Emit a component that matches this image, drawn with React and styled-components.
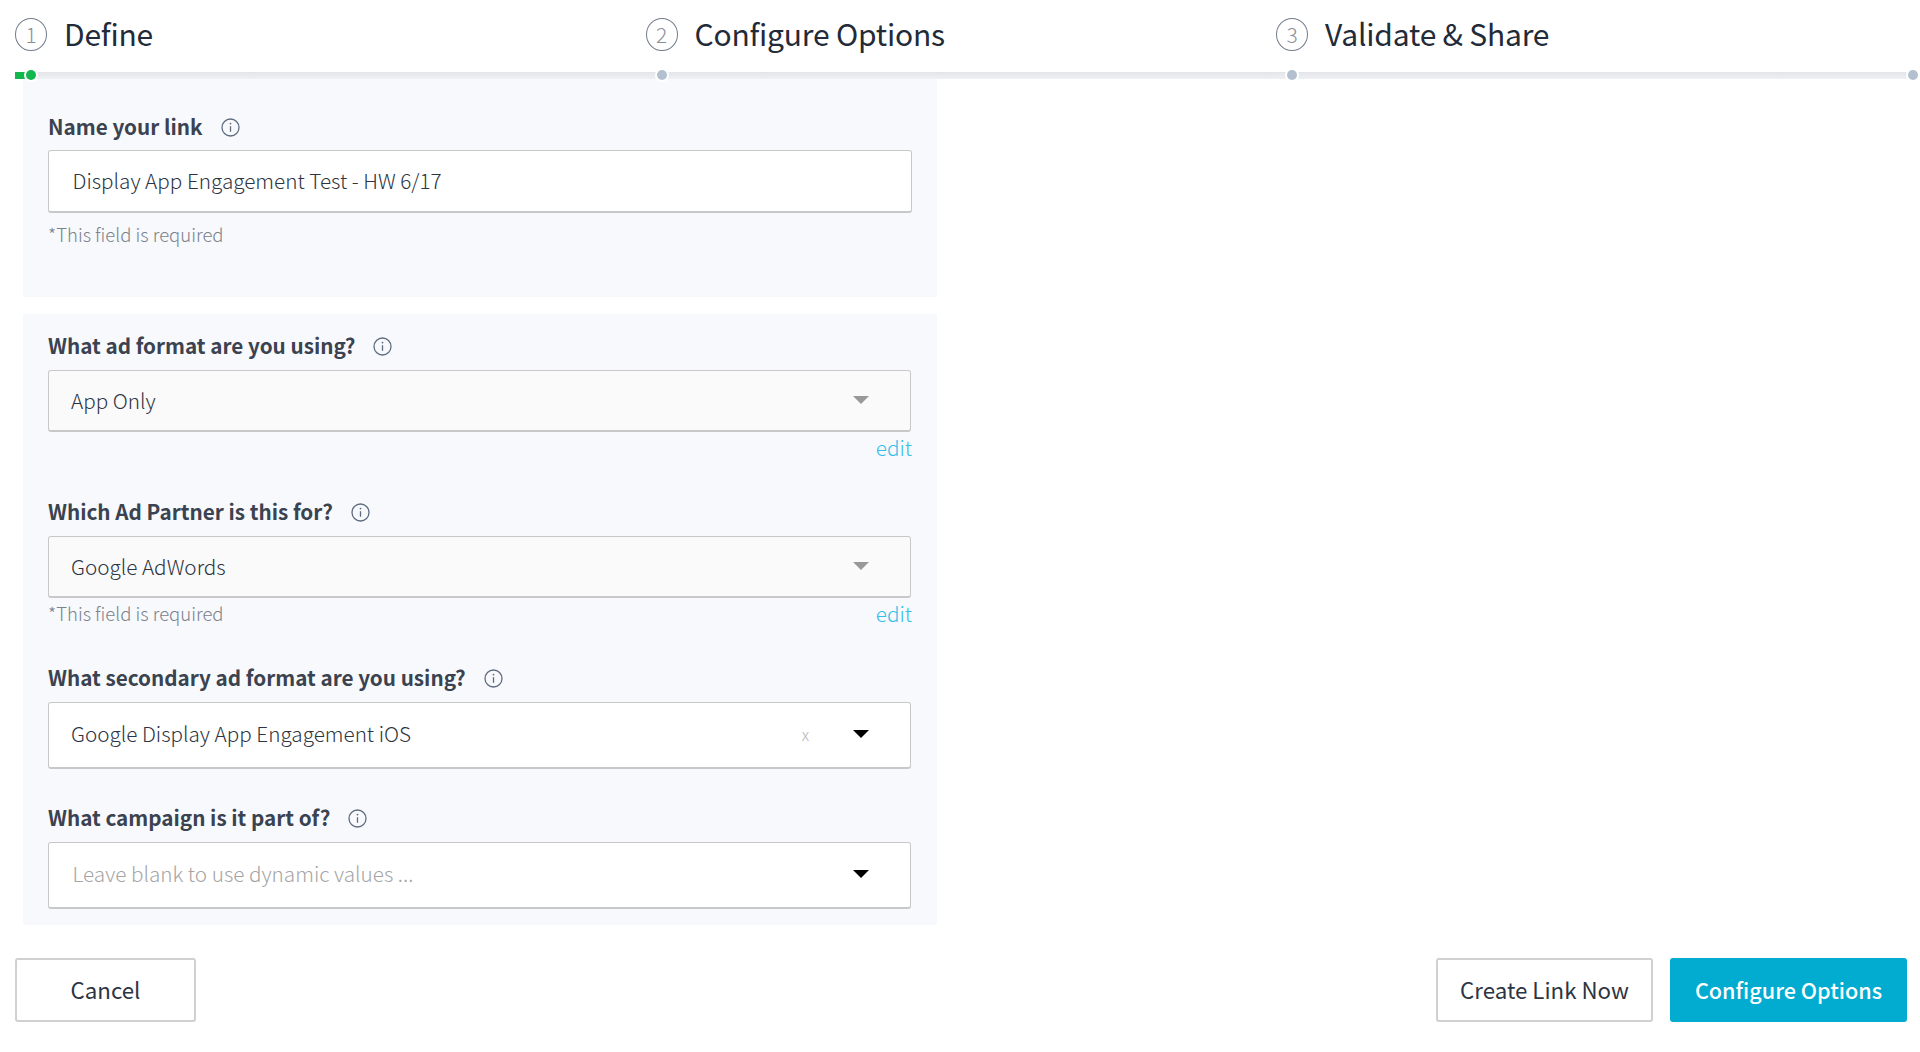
import React from 'react';
import styled, { createGlobalStyle } from 'styled-components';

const GlobalStyle = createGlobalStyle`
  html, body {
    margin: 0;
    padding: 0;
    background: #fff;
    font-family: "Noto Sans CJK SC", "Source Sans Pro", "Noto Sans", sans-serif;
    color: #2d3442;
  }
  * { box-sizing: border-box; }
`;

const Page = styled.div`
  width: 1920px;
  height: 1052px;
  overflow: hidden;
`;

const Stepper = styled.div`
  display: grid;
  grid-template-columns: repeat(3, 630.5px);
  padding-left: 15px;
`;

const Step = styled.div`
  display: flex;
  flex-direction: column;
`;

const StepHead = styled.div`
  height: 72px;
  padding-bottom: 4px;
  display: flex;
  align-items: center;
  gap: 17px;
`;

const StepNumber = styled.span`
  width: 32px;
  height: 33px;
  border: 1.5px solid #737c8c;
  border-radius: 50%;
  display: flex;
  align-items: center;
  justify-content: center;
  font-size: 21px;
  font-weight: 300;
  color: #8b8f98;
`;

const StepTitle = styled.span`
  font-size: 30px;
  line-height: 40px;
  margin-top: -2px;
  letter-spacing: -0.2px;
  font-weight: 400;
  color: #232a38;
`;

const StepBar = styled.div`
  position: relative;
  height: 7px;
  background: linear-gradient(#e3e5e9, #eef0f4);
`;

const Dot = styled.span`
  position: absolute;
  top: -2px;
  left: ${p => (p.$end ? 'auto' : '11px')};
  right: ${p => (p.$end ? '-11px' : 'auto')};
  width: 10px;
  height: 10px;
  border-radius: 50%;
  background: ${p => (p.$active ? '#12b84e' : '#b3c0cf')};
  box-shadow: 0 0 0 2px #fff;
`;

const Progress = styled.span`
  position: absolute;
  top: 0;
  left: 0;
  width: 10px;
  height: 7px;
  background: #12b84e;
  box-shadow: 0 0 0 1px #fff;
`;

const Main = styled.div`
  width: 914px;
  margin-left: 23px;
  display: flex;
  flex-direction: column;
  gap: 17px;
`;

const Panel = styled.section`
  background: #f7f9fc;
  padding: ${p => p.$padding};
  height: ${p => p.$height}px;
`;

const Field = styled.div`
  height: ${p => p.$height}px;
`;

const Label = styled.div`
  display: flex;
  align-items: center;
  gap: 18px;
  height: 28px;
  margin-bottom: ${p => p.$gap || 10}px;
  font-size: 20.7px;
  font-weight: 700;
  color: #3b4250;
`;

const InfoSvg = styled.svg`
  width: 19px;
  height: 19px;
  margin-top: 2px;
  flex: none;
`;

const Info = () => (
  <InfoSvg viewBox="0 0 19 19" fill="none" stroke="#5f6c80">
    <circle cx="9.5" cy="9.5" r="8.5" strokeWidth="1.3" />
    <path d="M9.5 8.2v5.6" strokeWidth="1.3" />
    <circle cx="9.5" cy="5.6" r="0.9" fill="#5f6c80" stroke="none" />
  </InfoSvg>
);

const TextInput = styled.input`
  display: block;
  width: 864px;
  height: 63px;
  padding: 0 24px 2px 23.5px;
  border: 1px solid #c8c8c8;
  border-bottom-width: 2px;
  border-radius: 3px;
  background: #fff;
  font: inherit;
  font-size: 20.7px;
  font-weight: 300;
  color: #2d3442;
  outline: none;
`;

const Select = styled.div`
  display: flex;
  align-items: center;
  width: 863px;
  height: ${p => (p.$disabled ? 62 : 67)}px;
  padding: 0 41px 0 22px;
  border: 1px solid #c8c8c8;
  border-bottom-width: 2px;
  border-radius: 3px;
  background: ${p => (p.$disabled ? '#fafafa' : '#fff')};
  font-size: 20.7px;
  font-weight: 300;
  color: #2d3442;
`;

const SelectValue = styled.span`
  flex: 1;
  margin-top: ${p => (p.$raised ? '-4px' : '-2px')};
  color: ${p => (p.$placeholder ? '#a5a5a5' : 'inherit')};
  padding-left: ${p => (p.$placeholder ? '1.5px' : '0')};
`;

const Clear = styled.span`
  margin-right: 44px;
  margin-top: -2px;
  font-size: 16px;
  color: #b5b5b5;
`;

const Caret = styled.span`
  width: 0;
  height: 0;
  margin-top: ${p => (p.$disabled ? '-1px' : '-2px')};
  border-left: 8px solid transparent;
  border-right: 8px solid transparent;
  border-top: 8px solid ${p => (p.$disabled ? '#999' : '#000')};
`;

const Below = styled.div`
  display: flex;
  justify-content: space-between;
  align-items: center;
  height: 30px;
  width: 863px;
  margin-top: ${p => p.$top || 0}px;
  font-size: 18.5px;
  font-weight: 300;
`;

const Helper = styled.span`
  color: #7c828c;
`;

const EditLink = styled.a`
  margin-left: auto;
  margin-right: -1px;
  margin-top: -1px;
  font-size: 20.7px;
  color: #35bfe6;
`;

const Footer = styled.div`
  display: flex;
  align-items: center;
  gap: 17px;
  margin-top: 33px;
  padding: 0 13px 0 15px;
`;

const Button = styled.button`
  height: 64px;
  width: ${p => p.$width}px;
  margin-right: ${p => (p.$push ? 'auto' : '0')};
  border: ${p => (p.$primary ? '0' : '2px solid #d0d0d0')};
  border-radius: 3px;
  background: ${p => (p.$primary ? '#02abd0' : '#fff')};
  color: ${p => (p.$primary ? '#fff' : '#2d3442')};
  font-family: inherit;
  font-size: ${p => (p.$primary ? 21.6 : 22.3)}px;
  font-weight: ${p => (p.$primary ? 500 : 400)};
  padding: 0 0 2px;
`;

const steps = ['Define', 'Configure Options', 'Validate & Share'];

const App = () => (
  <Page>
    <GlobalStyle />
    <Stepper>
      {steps.map((title, i) => (
        <Step key={title}>
          <StepHead>
            <StepNumber>{i + 1}</StepNumber>
            <StepTitle>{title}</StepTitle>
          </StepHead>
          <StepBar>
            {i === 0 && <Progress />}
            <Dot $active={i === 0} />
            {i === 2 && <Dot $end />}
          </StepBar>
        </Step>
      ))}
    </Stepper>
    <Main>
      <Panel $padding="33px 0 0 25px" $height={218}>
        <Label>Name your link <Info /></Label>
        <TextInput defaultValue="Display App Engagement Test - HW 6/17" />
        <Below $top={6}><Helper>*This field is required</Helper></Below>
      </Panel>
      <Panel $padding="17px 0 0 25px" $height={611}>
        <Field $height={166}>
          <Label $gap={11}>What ad format are you using? <Info /></Label>
          <Select $disabled>
            <SelectValue>App Only</SelectValue>
            <Caret $disabled />
          </Select>
          <Below><EditLink>edit</EditLink></Below>
        </Field>
        <Field $height={166}>
          <Label $gap={11}>Which Ad Partner is this for? <Info /></Label>
          <Select $disabled>
            <SelectValue>Google AdWords</SelectValue>
            <Caret $disabled />
          </Select>
          <Below>
            <Helper>*This field is required</Helper>
            <EditLink>edit</EditLink>
          </Below>
        </Field>
        <Field $height={140}>
          <Label $gap={11}>What secondary ad format are you using? <Info /></Label>
          <Select>
            <SelectValue $raised>Google Display App Engagement iOS</SelectValue>
            <Clear>x</Clear>
            <Caret />
          </Select>
        </Field>
        <Field $height={104}>
          <Label $gap={11}>What campaign is it part of? <Info /></Label>
          <Select>
            <SelectValue $raised $placeholder>Leave blank to use dynamic values ...</SelectValue>
            <Caret />
          </Select>
        </Field>
      </Panel>
    </Main>
    <Footer>
      <Button $width={181} $push>Cancel</Button>
      <Button $width={217}>Create Link Now</Button>
      <Button $width={237} $primary>Configure Options</Button>
    </Footer>
  </Page>
);

export default App;
